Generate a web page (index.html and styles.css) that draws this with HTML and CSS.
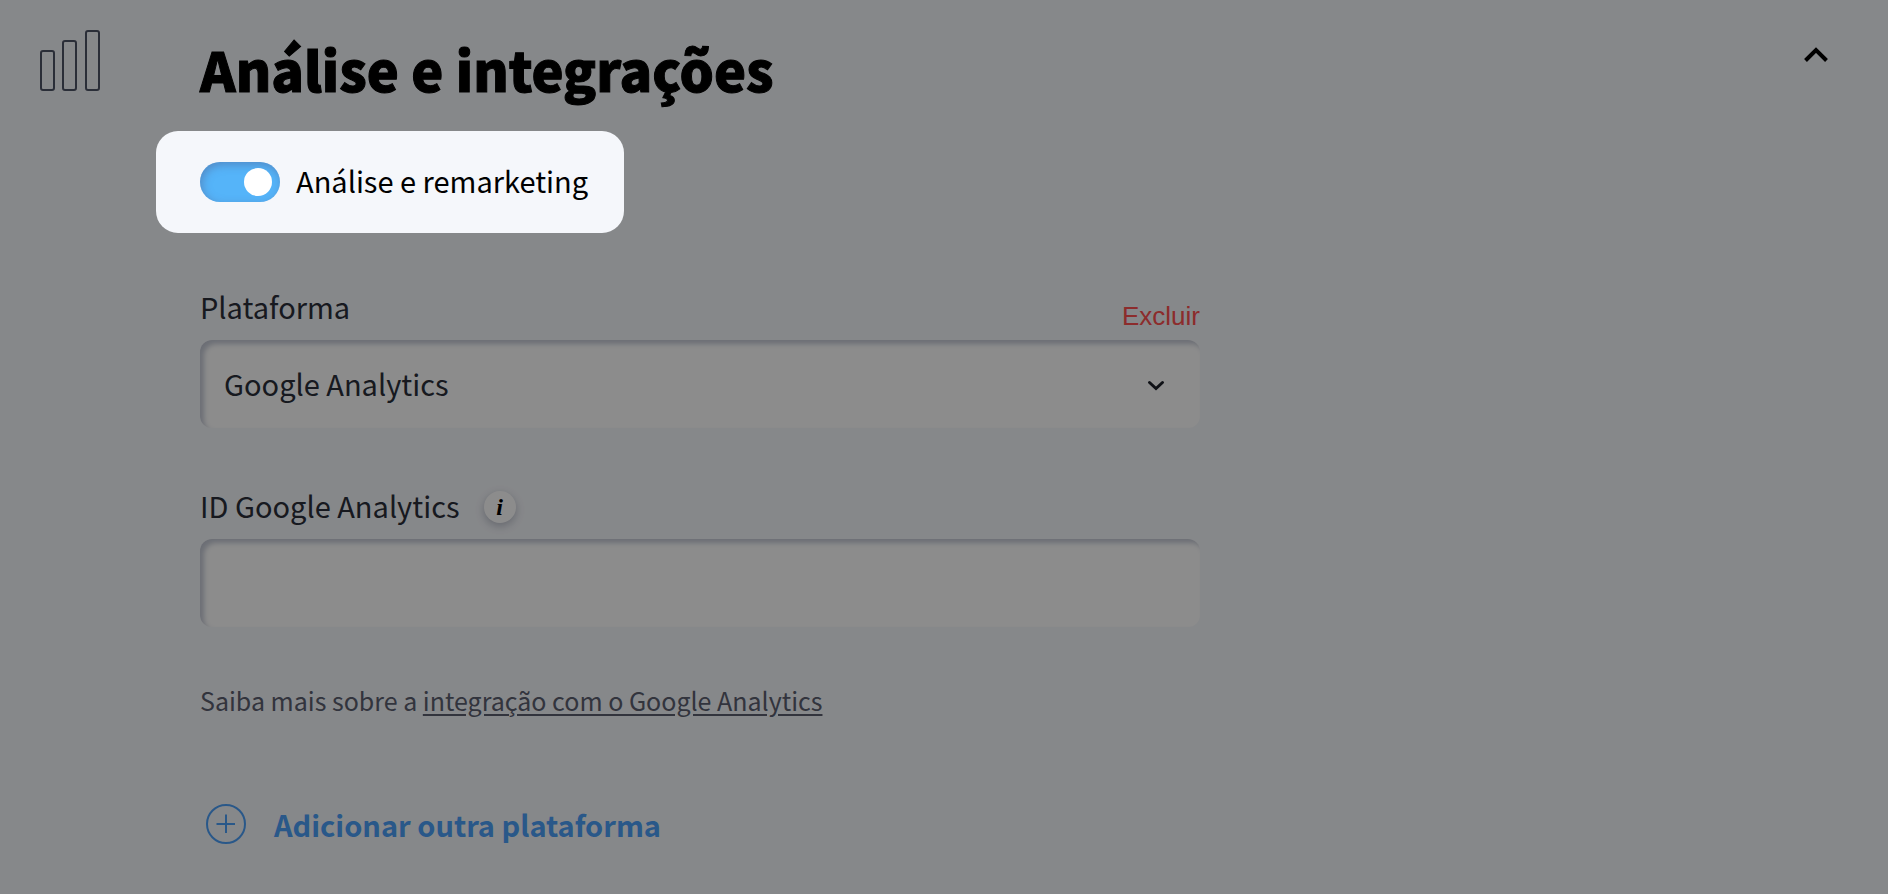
FILE: index.html
```html
<!DOCTYPE html>
<html lang="pt">
<head>
    <meta charset="utf-8" />
    <title>Análise e integrações</title>
    <link rel="stylesheet" href="styles.css">
</head>
<body>
<section class="panel">
    <svg class="panel-icon" width="60" height="62" viewBox="0 0 60 62" aria-hidden="true">
        <rect x="1" y="21" width="13" height="39" rx="2"/>
        <rect x="23" y="11" width="13" height="49" rx="2"/>
        <rect x="46" y="1" width="13" height="59" rx="2"/>
    </svg>
    <div class="content">
        <h1 class="title">Análise e integrações</h1>
        <label class="spotlight">
            <input class="toggle" type="checkbox" checked>
            <span>Análise e remarketing</span>
        </label>
        <div class="fields">
            <div class="field-head">
                <label for="platform">Plataforma</label>
                <button class="remove" type="button">Excluir</button>
            </div>
            <div class="select-wrap">
                <select class="control" id="platform">
                    <option>Google Analytics</option>
                </select>
                <svg class="arrow" width="18" height="12" viewBox="0 0 18 12" aria-hidden="true">
                    <path d="M2.5 2.5L9 8.5L15.5 2.5"/>
                </svg>
            </div>
            <div class="field-head second">
                <label for="tracking">ID Google Analytics</label>
                <button class="info" type="button">i</button>
            </div>
            <input class="control" id="tracking" type="text">
            <p class="hint">Saiba mais sobre a <a href="#">integração com o Google Analytics</a></p>
            <button class="add" type="button">
                <svg width="40" height="40" viewBox="0 0 40 40" aria-hidden="true">
                    <circle cx="20" cy="20" r="19"/>
                    <path d="M20 10.5V29M10.5 20H29"/>
                </svg>
                <span>Adicionar outra plataforma</span>
            </button>
        </div>
    </div>
    <button class="collapse" type="button" aria-label="Fechar">
        <svg width="26" height="18" viewBox="0 0 26 18" aria-hidden="true">
            <path d="M2.5 14.5L13 4L23.5 14.5"/>
        </svg>
    </button>
</section>
</body>
</html>
```
FILE: styles.css
```css
* {
    box-sizing: border-box;
}
body {
    margin: 0;
    min-height: 100vh;
    overflow: hidden;
    background: #f5f7fb;
    color: #2a2f3a;
    font: 29px/38px "Noto Sans CJK SC", "Noto Sans", sans-serif;
}
button {
    padding: 0;
    border: 0;
    background: none;
    font: inherit;
    cursor: pointer;
}
svg {
    fill: none;
}
.panel {
    display: flex;
    align-items: flex-start;
    padding: 30px 59px 40px 40px;
}
.panel-icon {
    flex: none;
    stroke: #4e5466;
    stroke-width: 2;
}
.content {
    flex: 1;
    padding: 7px 0 0 100px;
}
.title {
    margin: 0;
    color: #000;
    font-size: 54px;
    font-weight: 900;
    line-height: 64px;
    -webkit-text-stroke: 1px #000;
}
/* the shadow dims everything but the highlighted switch */
.spotlight {
    position: relative;
    z-index: 1;
    display: flex;
    align-items: center;
    gap: 16px;
    width: fit-content;
    margin: 30px 0 0 -44px;
    padding: 31px 36px 31px 44px;
    border-radius: 22px;
    background: #f5f7fb;
    color: #000;
    line-height: 36px;
    box-shadow: 0 0 0 3000px rgba(0, 0, 0, 0.45);
}
.spotlight span {
    padding-bottom: 4px;
}
.toggle {
    appearance: none;
    display: flex;
    align-items: center;
    justify-content: flex-end;
    width: 80px;
    height: 40px;
    margin: 0;
    padding: 0 8px;
    border-radius: 20px;
    background: #55b4f9;
    box-shadow: inset 2px 3px 8px rgba(80, 100, 150, 0.5);
}
.toggle::before {
    content: "";
    width: 28px;
    height: 28px;
    border-radius: 50%;
    background: #fff;
}
.toggle:not(:checked) {
    justify-content: flex-start;
    background: #c5cad6;
}
.fields {
    max-width: 1000px;
    margin-top: 54px;
}
.field-head {
    display: flex;
    height: 44px;
    margin-bottom: 9px;
}
.second {
    gap: 24px;
    margin-top: 58px;
}
.remove {
    align-self: flex-end;
    margin-left: auto;
    color: #ff5050;
    font: 26px/30px "Liberation Sans", Arial, sans-serif;
}
.select-wrap {
    position: relative;
}
.control {
    appearance: none;
    display: block;
    width: 100%;
    height: 88px;
    padding: 0 24px 2px;
    border: 0;
    border-radius: 12px;
    background: #fff;
    color: inherit;
    font: inherit;
    line-height: 48px;
    box-shadow: inset 4px 4px 5px #c5cad6;
}
.arrow {
    position: absolute;
    top: 40px;
    right: 35px;
    stroke: #1c1f28;
    stroke-width: 3;
    stroke-linecap: round;
    pointer-events: none;
}
.info {
    width: 32px;
    height: 32px;
    margin-top: 5px;
    border-radius: 50%;
    background: #fff;
    color: #000;
    font: italic bold 24px/32px "Liberation Serif", serif;
    box-shadow: 0 3px 8px rgba(50, 60, 90, 0.3);
}
.hint {
    margin: 57px 0 88px;
    color: #5b6070;
    font-size: 25px;
    line-height: 32px;
}
.hint a {
    color: inherit;
    text-underline-offset: 3px;
}
.add {
    display: flex;
    align-items: center;
    gap: 28px;
    margin-left: 6px;
    color: #4ca0fa;
    font-weight: 700;
}
.add svg {
    stroke: currentColor;
    stroke-width: 2;
}
.collapse {
    display: flex;
    margin-top: 16px;
}
.collapse svg {
    stroke: #000;
    stroke-width: 4;
}
```
